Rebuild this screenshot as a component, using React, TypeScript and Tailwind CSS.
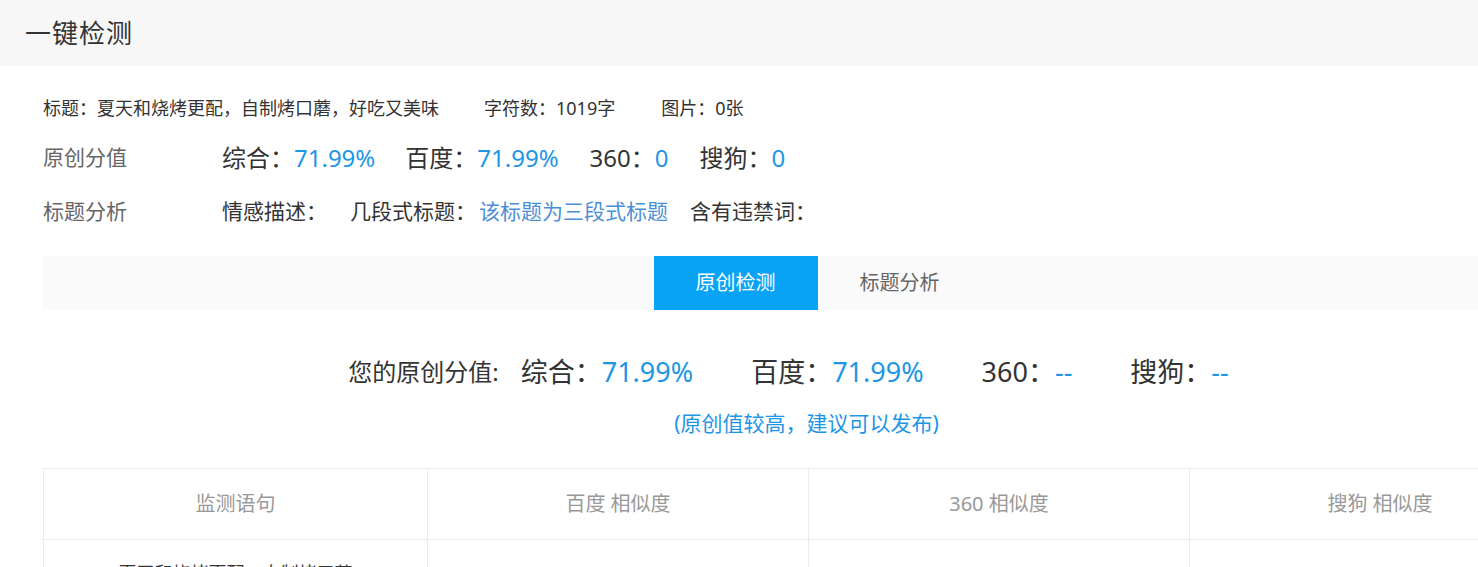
import React from "react"

const FONT = { fontFamily: '"Noto Sans", "Noto Sans CJK SC", sans-serif' }

const COLUMNS = ["监测语句", "百度 相似度", "360 相似度", "搜狗 相似度"]

function Score({ label, value, className = "" }: { label: string; value: string; className?: string }) {
    return (
        <span className={className}>
            <span className="text-[#333]">{label}：</span>
            <span className="text-[#1e96e6]">{value}</span>
        </span>
    )
}

export default function App() {
    return (
        <div className="w-full h-[567px] overflow-hidden bg-white" style={FONT}>
            {/* page title bar */}
            <div className="h-[66px] bg-[#f7f7f7] flex items-center pl-[25px]">
                <h1 className="text-[26px] text-[#333] tracking-[1px]">一键检测</h1>
            </div>

            <div className="w-[1527px] ml-[43px]">
                {/* article summary */}
                <div className="pt-[29px] h-[86px] text-[18px] text-[#333] flex">
                    <span>标题：夏天和烧烤更配，自制烤口蘑，好吃又美味</span>
                    <span className="ml-[45px]">字符数：1019字</span>
                    <span className="ml-[46px]">图片：0张</span>
                </div>

                <div className="flex items-center h-[52px] -mt-[20px]">
                    <span className="w-[179px] text-[21px] text-[#666]">原创分值</span>
                    <div className="flex text-[24px]">
                        <Score label="综合" value="71.99%" />
                        <Score label="百度" value="71.99%" className="ml-[30px]" />
                        <Score label="360" value="0" className="ml-[31px]" />
                        <Score label="搜狗" value="0" className="ml-[31px]" />
                    </div>
                </div>

                <div className="flex items-center h-[56px]">
                    <span className="w-[179px] text-[21px] text-[#666]">标题分析</span>
                    <div className="flex text-[21px] text-[#333]">
                        <span>情感描述：</span>
                        <span className="ml-[23px]">几段式标题：</span>
                        <span className="ml-[3px] text-[#4b8fd6]">该标题为三段式标题</span>
                        <span className="ml-[22px]">含有违禁词：</span>
                    </div>
                </div>

                {/* tabs */}
                <div className="mt-[16px] h-[54px] bg-[#fafafa] flex justify-center pl-[22px]">
                    <button className="w-[164px] h-full bg-[#09a3f6] text-white text-[20px]">原创检测</button>
                    <button className="w-[164px] h-full text-[#666] text-[20px]">标题分析</button>
                </div>

                {/* score summary */}
                <div className="flex justify-center pr-[36px] mt-[42px] text-[27px] text-[#333] h-[40px] items-center">
                    <span className="text-[24px]">您的原创分值:</span>
                    <Score label="综合" value="71.99%" className="ml-[22px]" />
                    <Score label="百度" value="71.99%" className="ml-[58px]" />
                    <Score label="360" value="--" className="ml-[58px]" />
                    <Score label="搜狗" value="--" className="ml-[58px]" />
                </div>
                <div className="flex justify-center mt-[16px] text-[21px] text-[#1e96e6]">
                    (原创值较高，建议可以发布)
                </div>

                {/* similarity table */}
                <table className="mt-[28px] w-full border-collapse table-fixed">
                    <colgroup>
                        <col className="w-[384px]" />
                        <col className="w-[381px]" />
                        <col className="w-[381px]" />
                        <col className="w-[381px]" />
                    </colgroup>
                    <thead>
                        <tr className="h-[71px]">
                            {COLUMNS.map((c) => (
                                <th key={c} className="border border-[#ececec] font-normal text-[20px] text-[#999]">
                                    {c}
                                </th>
                            ))}
                        </tr>
                    </thead>
                    <tbody>
                        <tr className="h-[71px]">
                            <td className="border border-[#ececec] text-[18px] text-[#333] text-center align-top pt-[20px]">
                                夏天和烧烤更配，自制烤口蘑
                            </td>
                            <td className="border border-[#ececec]" />
                            <td className="border border-[#ececec]" />
                            <td className="border border-[#ececec]" />
                        </tr>
                    </tbody>
                </table>
            </div>
        </div>
    )
}
